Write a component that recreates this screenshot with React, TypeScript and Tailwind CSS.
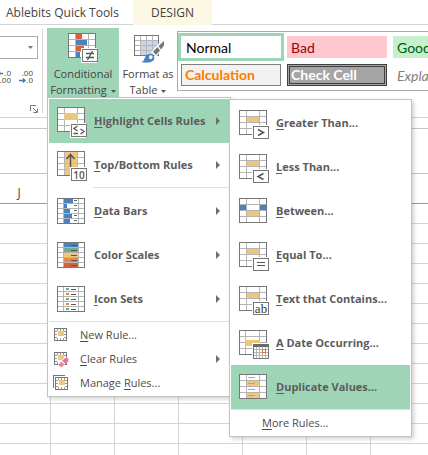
import type { ReactNode } from "react";

const INK = "#777777";
const LINE = "#b5b5b5";
const GOLD = "#edc77c";
const BLUE = "#4a82bd";
const GREEN = "#74a892";
const ORANGE = "#e58a43";
const RED = "#d9603b";

type Cell = [x: number, y: number, w: number, h: number, fill: string];

function CellGrid({ rows = 4, step = 6, cols = [7, 20], cells = [], marks = [] }: {
  rows?: number; step?: number; cols?: number[]; cells?: Cell[]; marks?: Cell[];
}) {
  const h = rows * step;
  return (
    <g shapeRendering="crispEdges">
      <rect x="0" y="0" width="28" height={h + 1} fill="#fff" />
      {cols.map((x) => <rect key={x} x={x} y="0" width="1" height={h} fill={LINE} />)}
      {Array.from({ length: rows - 1 }, (_, i) => (
        <rect key={i} x="0" y={(i + 1) * step} width="28" height="1" fill={LINE} />
      ))}
      {cells.concat(marks).map(([x, y, w, ch, fill], i) => (
        <rect key={i} x={x} y={y} width={w} height={ch} fill={fill} />
      ))}
      <rect x="0.5" y="0.5" width="27" height={h} fill="none" stroke={INK} />
    </g>
  );
}

function Badge({ y = 16, children }: { y?: number; children: ReactNode }) {
  return (
    <g>
      <rect x="13" y={y - 1} width="16" height="15" fill="#fff" />
      <rect x="14.5" y={y + 0.5} width="15" height="12" fill="#fff" stroke={INK} shapeRendering="crispEdges" />
      <g transform={`translate(14 ${y})`} fill="none" stroke="#555" strokeWidth="1.5">{children}</g>
    </g>
  );
}

function RuleIcon({ top = 9, children }: { top?: number; children: ReactNode }) {
  return (
    <svg className="h-11 w-[31px] shrink-0" viewBox={`0 ${-top} 31 44`} aria-hidden="true">{children}</svg>
  );
}

const highlightIcon = (
  <RuleIcon top={8}>
    <CellGrid cells={[[7, 6, 14, 7, GOLD]]} />
    <Badge y={17}><path d="M6.5 2 3 4.5 6.5 7M2.500 9.5h4.500M9.500 5 13 7.500 9.500 10" strokeWidth="1.300" /></Badge>
  </RuleIcon>
);
const topBottomIcon = (
  <RuleIcon top={8}>
    <CellGrid cells={[[8, 1, 12, 23, GOLD]]} marks={[[8, 6, 12, 1, "#d9bd88"], [8, 12, 12, 1, "#d9bd88"], [8, 18, 12, 1, "#d9bd88"]]} />
    <path d="M13.500 16V4M9.500 8l4-4.500 4 4.500" fill="none" stroke="#555" strokeWidth="1.500" />
    <Badge y={17}>
      <text x="8" y="10.500" textAnchor="middle" fill="#555" stroke="none" className="font-['Open_Sans',sans-serif] text-[10px] font-semibold">10</text>
    </Badge>
  </RuleIcon>
);
const dataBarsIcon = (
  <RuleIcon>
    <CellGrid rows={5} step={5} cols={[6, 21]}
      cells={[9, 3, 6, 8, 6].map((w, i): Cell => [7, i * 5 + 1, w, 4, BLUE])}
      marks={[0, 1, 2, 3, 4].map((i): Cell => [17, i * 5 + 2, 3, 1, "#666"])} />
  </RuleIcon>
);
const colorScalesIcon = (
  <RuleIcon>
    <CellGrid rows={5} step={5} cols={[6, 21]}
      cells={[BLUE, GREEN, GOLD, ORANGE, RED].map((c, i): Cell => [7, i * 5 + 1, 14, 4, c])}
      marks={[0, 1, 2, 3, 4].map((i): Cell => [14, i * 5 + 3, 6, 1, "#555"])} />
  </RuleIcon>
);
const iconSetsIcon = (
  <RuleIcon>
    <CellGrid rows={5} step={5} cols={[6, 21]}
      cells={[GREEN, ORANGE, GREEN, ORANGE, GREEN].map((c, i): Cell => [9, i * 5 + 2, 3, 2, c])}
      marks={[0, 1, 2, 3, 4].map((i): Cell => [14, i * 5 + 3, 5, 1, "#555"])} />
  </RuleIcon>
);
const goldCell: Cell[] = [[8, 7, 12, 5, GOLD]];
const greaterIcon = (
  <RuleIcon><CellGrid cells={goldCell} /><Badge><path d="M5 3.500 10.500 6.500 5 9.500" /></Badge></RuleIcon>
);
const lessIcon = (
  <RuleIcon><CellGrid cells={goldCell} /><Badge><path d="M10.500 3.500 5 6.500 10.500 9.500" /></Badge></RuleIcon>
);
const betweenIcon = (
  <RuleIcon><CellGrid cells={[[1, 7, 6, 5, BLUE], [21, 7, 6, 5, BLUE], [8, 13, 12, 5, GOLD]]} /></RuleIcon>
);
const equalIcon = (
  <RuleIcon><CellGrid cells={goldCell} /><Badge><path d="M4 4.500h8M4 7.500h8" strokeWidth="1" /></Badge></RuleIcon>
);
const textIcon = (
  <RuleIcon>
    <CellGrid cells={goldCell} />
    <Badge>
      <text x="8" y="10.500" textAnchor="middle" fill="#333" stroke="none" className="font-['Liberation_Serif',serif] text-[13px] font-normal">ab</text>
    </Badge>
  </RuleIcon>
);
const dateIcon = (
  <RuleIcon>
    <CellGrid cols={[6, 20]} cells={[[6, 10, 15, 6, GOLD]]} />
    <g shapeRendering="crispEdges">
      <rect x="13" y="13" width="16" height="16" fill="#fff" />
      <rect x="14.500" y="14.500" width="15" height="14" fill="#fff" stroke={INK} />
      <rect x="14" y="14" width="16" height="3" fill="#6a6a6a" />
      {[17, 20, 23, 26].map((x) => <rect key={x} x={x} y="17" width="1" height="11" fill={LINE} />)}
      {[19, 22, 25].map((y) => <rect key={y} x="15" y={y} width="14" height="1" fill={LINE} />)}
      <rect x="23.500" y="19.500" width="3" height="3" fill="#fff" stroke="#e0702a" />
    </g>
  </RuleIcon>
);
const duplicateIcon = (
  <RuleIcon>
    <CellGrid cells={[[8, 7, 12, 5, GOLD], [8, 19, 12, 5, GOLD]]}
      marks={[0, 1, 2, 3].map((i): Cell => [9, i * 6 + 3, 7, 1, "#a8a8a8"])} />
  </RuleIcon>
);

function SmallGrid() {
  return (
    <g shapeRendering="crispEdges">
      <rect x="2.500" y="2.500" width="12" height="12" fill="#fff" stroke={INK} />
      {[5, 8, 11].map((p) => (
        <g key={p} fill="#999">
          <rect x={p} y="3" width="1" height="2" /><rect x={p} y="12" width="1" height="2" />
          <rect x="3" y={p} width="2" height="1" /><rect x="12" y={p} width="2" height="1" />
        </g>
      ))}
      <rect x="6" y="5" width="6" height="5" fill={GOLD} />
    </g>
  );
}

const newRuleIcon = <svg width="18" height="18" viewBox="0 0 18 18" aria-hidden="true"><SmallGrid /></svg>;
const clearRuleIcon = (
  <svg width="18" height="18" viewBox="0 0 18 18" aria-hidden="true">
    <SmallGrid />
    <path d="M6 14 12.500 7.500h4v3L10 17H8z" fill="#fff" />
    <path d="M7 14l2.500-2.500 3 3L10 17H8.500L7 15.500z" fill="#e98a9c" />
    <path d="M10.200 10.800 13 8h2.500l1 1v2l-3 3z" fill="#e07a90" />
  </svg>
);
const manageRuleIcon = (
  <svg width="18" height="18" viewBox="0 0 18 18" aria-hidden="true">
    <path d="M1.500 14V1.500H13" fill="none" stroke={INK} shapeRendering="crispEdges" />
    <g transform="translate(1 1)"><SmallGrid /></g>
  </svg>
);

function Caret() {
  return <svg width="5" height="3" viewBox="0 0 5 3" className="ml-1 inline-block align-middle" aria-hidden="true"><path d="M0 0h5L2.500 3z" fill="#555" /></svg>;
}

/** Menu caption with its keyboard access key underlined. */
function Caption({ text, accessKey }: { text: string; accessKey: number }) {
  return (
    <span className="whitespace-nowrap">
      {text.slice(0, accessKey)}
      <u className="underline-offset-2">{text[accessKey]}</u>
      {text.slice(accessKey + 1)}
    </span>
  );
}

function SubmenuArrow() {
  return <svg width="4" height="8" viewBox="0 0 4 8" className="ml-auto mr-[9px] shrink-0" aria-hidden="true"><path d="M0 0l4 4-4 4z" fill="#6e6e6e" /></svg>;
}

function RuleItem({ icon, text, accessKey = 0, active = false, submenu = false }: {
  icon: ReactNode; text: string; accessKey?: number; active?: boolean; submenu?: boolean;
}) {
  return (
    <button role="menuitem" className={`flex h-11 w-full items-center gap-1.5 pl-2 text-left text-[11px] font-bold text-[#5c5c5c] ${active ? "bg-[#9fd5b7]" : "bg-white"}`}>
      {icon}
      <Caption text={text} accessKey={accessKey} />
      {submenu && <SubmenuArrow />}
    </button>
  );
}

function CommandItem({ icon, text, accessKey = 0, submenu = false }: {
  icon?: ReactNode; text: string; accessKey?: number; submenu?: boolean;
}) {
  return (
    <button role="menuitem" className={`flex h-6 w-full items-center text-left text-[11px] text-[#4c4c4c] ${icon ? "gap-2.5 pl-[3px]" : "pl-[31px]"}`}>
      {icon}
      <Caption text={text} accessKey={accessKey} />
      {submenu && <SubmenuArrow />}
    </button>
  );
}

const menuBox = "absolute border border-[#c3c3c3] bg-white p-px shadow-[2px_2px_4px_rgba(0,0,0,0.18)]";

function RulesMenu() {
  return (
    <div role="menu" aria-label="Conditional Formatting" className={`${menuBox} left-[47px] top-[97px] w-[184px]`}>
      <RuleItem icon={highlightIcon} text="Highlight Cells Rules" active submenu />
      <RuleItem icon={topBottomIcon} text="Top/Bottom Rules" submenu />
      <hr className="mb-px ml-11 border-[#e0e0e0]" />
      <RuleItem icon={dataBarsIcon} text="Data Bars" submenu />
      <RuleItem icon={colorScalesIcon} text="Color Scales" accessKey={6} submenu />
      <RuleItem icon={iconSetsIcon} text="Icon Sets" submenu />
      <hr className="mb-px border-[#e0e0e0]" />
      <CommandItem icon={newRuleIcon} text="New Rule..." />
      <CommandItem icon={clearRuleIcon} text="Clear Rules" submenu />
      <CommandItem icon={manageRuleIcon} text="Manage Rules..." accessKey={7} />
    </div>
  );
}

function HighlightMenu() {
  return (
    <div role="menu" aria-label="Highlight Cells Rules" className={`${menuBox} left-[229px] top-[99px] w-[183px]`}>
      <RuleItem icon={greaterIcon} text="Greater Than..." />
      <RuleItem icon={lessIcon} text="Less Than..." />
      <RuleItem icon={betweenIcon} text="Between..." />
      <RuleItem icon={equalIcon} text="Equal To..." />
      <RuleItem icon={textIcon} text="Text that Contains..." />
      <RuleItem icon={dateIcon} text="A Date Occurring..." />
      <RuleItem icon={duplicateIcon} text="Duplicate Values..." active />
      <hr className="mb-px border-[#e0e0e0]" />
      <CommandItem text="More Rules..." />
    </div>
  );
}

function ConditionalIcon() {
  return (
    <svg width="31" height="31" viewBox="0 0 31 31" aria-hidden="true">
      <CellGrid cols={[7, 13, 20]} cells={[[8, 1, 6, 5, RED], [8, 7, 11, 5, BLUE], [8, 13, 8, 5, RED], [8, 19, 4, 5, BLUE]]} />
      <Badge><path d="M4 4.500h8M4 8.500h8M10.500 2l-5 9" strokeWidth="1.300" /></Badge>
    </svg>
  );
}

function FormatTableIcon() {
  return (
    <svg width="31" height="31" viewBox="0 0 31 31" aria-hidden="true">
      <g shapeRendering="crispEdges">
        <rect x="1.500" y="2.500" width="24" height="20" fill="#fff" stroke={INK} />
        <rect x="8" y="8" width="17" height="14" fill="#c3d8ee" />
        {[7, 13, 19].map((x) => <rect key={x} x={x} y="3" width="1" height="19" fill={LINE} />)}
        {[7, 12, 17].map((y) => <rect key={y} x="2" y={y} width="23" height="1" fill={LINE} />)}
      </g>
      <path d="M31 5 18 19l5 5L31 14z" fill="#fff" />
      <path d="M31 8 25.500 13l2.500 3.500 3-4z" fill="#777" />
      <path d="M24.500 14 20 18.500l3 3.500 4-4.500z" fill="#777" />
      <path d="M8 29c3 0 3-3 4.500-5.500C14.500 20.500 18 20 20 22s2 5-1 6.500c-3 1.500-7 1.500-11 .5z" fill={BLUE} />
      <path d="M16 23c1.500-1.500 4-.5 3.500 1.500-.5 1.500-2 2-3 1.500z" fill="#fff" />
    </svg>
  );
}

function DecimalButton({ kind }: { kind: "increase" | "decrease" }) {
  const increase = kind === "increase";
  return (
    <button aria-label={increase ? "Increase Decimal" : "Decrease Decimal"} className="w-[14px]">
      <svg width="14" height="16" viewBox="0 0 14 16" aria-hidden="true" fill="#444" className="font-['Open_Sans',sans-serif] text-[8px]">
        <text x="14" y="7" textAnchor="end">{increase ? ".0" : ".00"}</text>
        <text x="14" y="14" textAnchor="end">{increase ? ".00" : ".0"}</text>
        <path d={increase ? "M6 4.500H1M3 2.500l-2 2 2 2" : "M0 11.500h6M4 9.500l2 2-2 2"} fill="none" stroke="#3f76b5" strokeWidth="1.300" />
      </svg>
    </button>
  );
}

function Ribbon() {
  return (
    <div className="flex h-[93px] overflow-hidden border-b border-[#d0d0d0] text-[#444]">
      <div className="my-1 flex w-[43px] shrink-0 flex-col border-r border-[#d8d8d8]">
        <div className="relative mt-[7px] mr-1">
          <select aria-label="Number format" className="block h-[23px] w-full appearance-none border border-l-0 border-[#ababab] bg-white" />
          <svg width="5" height="3" viewBox="0 0 5 3" className="pointer-events-none absolute right-[5px] top-[10px]" aria-hidden="true"><path d="M0 0h5L2.500 3z" fill="#777" /></svg>
        </div>
        <div className="mt-2.5 -ml-[3px] flex gap-2">
          <DecimalButton kind="increase" />
          <DecimalButton kind="decrease" />
        </div>
        <button aria-label="Number settings" className="mr-1 mt-auto self-end">
          <svg width="8" height="8" viewBox="0 0 8 8" fill="none" stroke="#777" aria-hidden="true"><path d="M.5 6V.5H6M3 3l4 4M7.500 3.500v4h-4" /></svg>
        </button>
      </div>
      <button className="ml-1 mt-[3px] flex w-[72px] shrink-0 flex-col items-center bg-[#9fd5b7] pt-[5px] text-[11px] leading-4">
        <ConditionalIcon />
        <span className="mt-0.5">Conditional</span>
        <span className="whitespace-nowrap">Formatting<Caret /></span>
      </button>
      <button className="mt-[3px] flex w-[58px] shrink-0 flex-col items-center pt-[5px] text-[11px] leading-4">
        <FormatTableIcon />
        <span className="mt-0.5 whitespace-nowrap">Format as</span>
        <span className="whitespace-nowrap">Table<Caret /></span>
      </button>
      <div className="mt-1.5 h-[60px] flex-1 overflow-hidden border border-r-0 border-[#ababab] font-[Lato,sans-serif] text-[14px] leading-[21px]">
        <div className="grid w-[330px] grid-cols-[106px_106px_106px] text-left">
          <button className="mt-px h-7 border-[3px] border-[#9fd5b7] pl-[5px] text-left text-black">Normal</button>
          <button className="mx-[3px] mt-1 h-[22px] bg-[#ffc7ce] pl-1 text-left text-[#9c0006]">Bad</button>
          <button className="mx-[3px] mt-1 h-[22px] bg-[#c6efce] pl-1 text-left text-[#006100]">Good</button>
          <button className="mx-[3px] mt-[3px] h-[22px] border border-[#7f7f7f] bg-[#f2f2f2] pl-[3px] text-left font-bold leading-5 text-[#fa7d00]">Calculation</button>
          <button className="mx-[3px] mt-[3px] h-[22px] border-[3px] border-double border-[#3f3f3f] bg-[#a5a5a5] pl-px text-left font-bold leading-4 text-white">Check Cell</button>
          <button className="mx-[3px] mt-[3px] h-[22px] whitespace-nowrap pl-1 text-left italic text-[#7f7f7f]">Explanatory</button>
        </div>
      </div>
    </div>
  );
}

function Sheet() {
  return (
    <div className="flex-1 overflow-hidden">
      <div className="h-[30px] border-b border-[#9b9b9b] pt-[9px] text-[12px] leading-5 text-[#444]">
        <div className="w-[38px] text-center">J</div>
      </div>
      {Array.from({ length: 13 }, (_, row) => (
        <div key={row} className="flex h-5 border-b border-[#d4d4d4]">
          <div className="w-[51px] shrink-0 border-r border-[#d4d4d4]" />
          {Array.from({ length: 5 }, (_, col) => (
            <div key={col} className="w-16 shrink-0 border-r border-[#d4d4d4]" />
          ))}
        </div>
      ))}
    </div>
  );
}

export default function App() {
  return (
    <div className="relative flex h-screen flex-col overflow-hidden bg-white font-['Open_Sans','Noto_Sans',sans-serif]">
      <nav className="flex h-[25px] shrink-0 text-[12px] leading-[25px] text-[#444]">
        <button className="w-[133px] whitespace-nowrap border-b border-[#d4d4d4] pl-1.5 text-left">Ablebits Quick Tools</button>
        <button className="w-[79px] bg-[#fdf8e4]">DESIGN</button>
        <div className="flex-1 border-b border-[#d4d4d4]" />
      </nav>
      <Ribbon />
      <div className="h-[11px] shrink-0 border-b border-[#c6c6c6]" />
      <div className="h-[45px] shrink-0 border-b border-[#c6c6c6]" />
      <Sheet />
      <RulesMenu />
      <HighlightMenu />
    </div>
  );
}
